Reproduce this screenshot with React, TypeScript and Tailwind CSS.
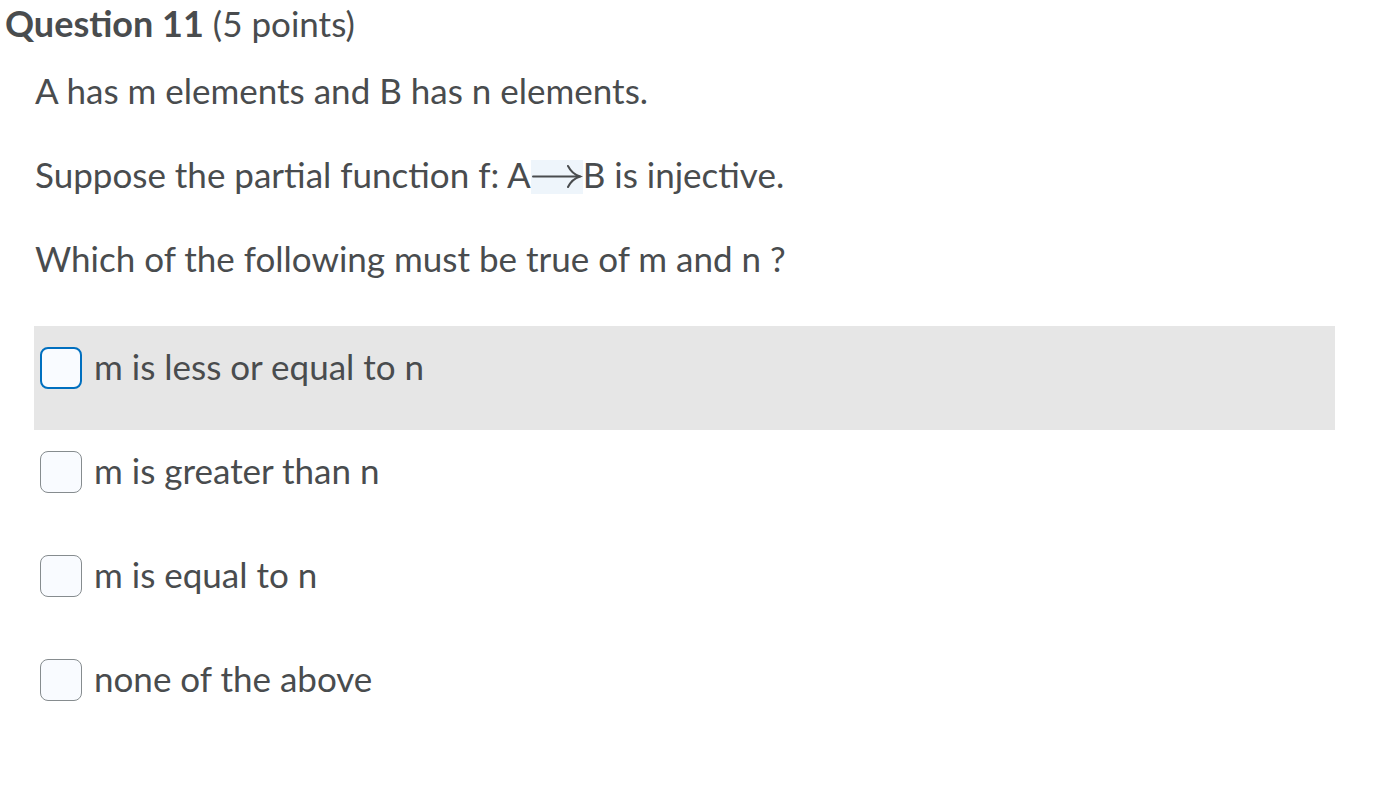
import React from 'react';

const options = [
  { label: 'm is less or equal to n', hover: true },
  { label: 'm is greater than n', hover: false },
  { label: 'm is equal to n', hover: false },
  { label: 'none of the above', hover: false },
];

// MathJax-style long right arrow
const LongArrow = () => (
  <span className="inline-block align-middle bg-[#eef5fb] w-[52px] h-[34px] -mt-[4px]">
    <svg width="52" height="34" viewBox="0 0 52 34" fill="none" stroke="#494c4e" strokeWidth="2" strokeLinecap="round">
      <path d="M2 16.5H49" />
      <path d="M37 6Q41 14 49 16.5Q41 19 37 27" />
    </svg>
  </span>
);

const App = () => {
  return (
    <div className="min-h-screen bg-white text-[#494c4e] font-['Lato','Liberation_Sans',sans-serif]">
      {/* Header */}
      <h2 className="pl-[5px] h-[52px] text-[35px] leading-[46px]">
        <span className="font-bold text-[36px]">Question 11</span> <span className="font-normal">(5 points)</span>
      </h2>

      {/* Question body */}
      <div className="pl-[35px] text-[35px] leading-[42px]">
        <p className="mt-[17px]">A has m elements and B has n elements.</p>
        <p className="mt-[42px]">
          Suppose the partial function f: A<LongArrow />B is injective.
        </p>
        <p className="mt-[42px]">Which of the following must be true of m and n ?</p>
      </div>

      {/* Options */}
      <div className="mt-[47px] ml-[34px] w-[1301px]">
        {options.map((opt) => (
          <label
            key={opt.label}
            className={`flex items-start h-[104px] pl-[6px] pt-[21px] ${opt.hover ? 'bg-[#e6e6e6]' : ''}`}
          >
            <span
              className={`w-[42px] h-[42px] rounded-[8px] bg-[#f9fbff] shrink-0 ${
                opt.hover ? 'border-2 border-[#006fbf]' : 'border border-[#868c8f]'
              }`}
            />
            <span className="ml-[12px] -mt-[2px] text-[35px] leading-[42px]">{opt.label}</span>
          </label>
        ))}
      </div>
    </div>
  );
};

export default App;
